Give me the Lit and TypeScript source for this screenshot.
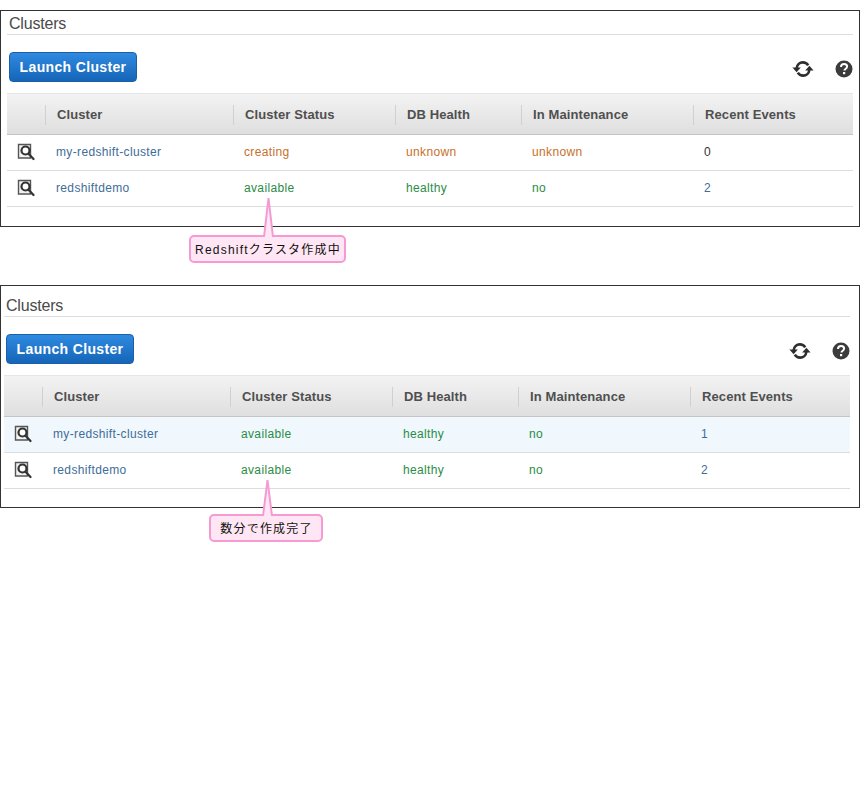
import { LitElement, html, css, svg } from 'lit';
import { customElement, property } from 'lit/decorators.js';

type Tone = 'warn' | 'ok' | 'link' | 'plain';
interface Cell { text: string; tone: Tone }
interface Row { name: string; highlight?: boolean; cells: Cell[] }

const warn = (text: string): Cell => ({ text, tone: 'warn' });
const ok = (text: string): Cell => ({ text, tone: 'ok' });
const link = (text: string): Cell => ({ text, tone: 'link' });
const plain = (text: string): Cell => ({ text, tone: 'plain' });

const COLUMNS = ['Cluster', 'Cluster Status', 'DB Health', 'In Maintenance', 'Recent Events'];

const zoomIcon = svg`<svg width="18" height="18" viewBox="0 0 18 18">
  <path d="M1.500 1.500h12v13.500h-12z" fill="#f2f2f2" stroke="#555" stroke-width="1.400"/>
  <circle cx="8.500" cy="7.500" r="4" fill="#fff" stroke="#333" stroke-width="2.200"/>
  <path d="M11.500 10.800l5 5.200" stroke="#333" stroke-width="2.200" stroke-linecap="round"/>
</svg>`;

const refreshIcon = svg`<svg width="22" height="18" viewBox="0 0 22 18">
  <path d="M4.600 8.400C5 4.600 7.700 2.400 10.800 2.400c2.400 0 4.300 1.100 5.400 3" fill="none" stroke="#2e2e2e" stroke-width="2.600"/>
  <path d="M17.400 9.600c-.4 3.800-3.100 6-6.200 6-2.400 0-4.300-1.100-5.400-3" fill="none" stroke="#2e2e2e" stroke-width="2.600"/>
  <path d="M0.400 7.400h8.400L4.600 12.200z" fill="#2e2e2e"/>
  <path d="M13.200 10.600h8.400L17.400 5.800z" fill="#2e2e2e"/>
</svg>`;

const helpIcon = svg`<svg width="18" height="18" viewBox="0 0 18 18">
  <circle cx="9" cy="9" r="8.500" fill="#3c3c3c"/>
  <path d="M6 7c0-1.900 1.300-2.900 3.100-2.900 1.800 0 3 1 3 2.500 0 1.300-.8 1.900-1.600 2.400-.7.500-1 .8-1 1.600" fill="none" stroke="#fff" stroke-width="2"/>
  <rect x="8" y="12" width="2.200" height="2.200" fill="#fff"/>
</svg>`;

@customElement('cluster-panel')
class ClusterPanel extends LitElement {
  @property({ type: Array }) rows: Row[] = [];

  static styles = css`
    :host {
      display: block;
    }
    .title {
      height: 23px;
      font-size: 16px;
      line-height: 25px;
      color: #4a4a4a;
      border-bottom: 1px solid #ddd;
      padding-left: 2px;
      letter-spacing: -0.2px;
    }
    .toolbar {
      display: flex;
      align-items: center;
      justify-content: space-between;
      height: 30px;
      margin: 17px 0 11px;
      padding: 0 0 0 2px;
    }
    .launch {
      width: 128px;
      height: 30px;
      box-sizing: border-box;
      border: 1px solid #1b5fa8;
      border-radius: 4px;
      background: linear-gradient(#2f8ae0, #1565b8);
      color: #fff;
      font: bold 14px 'Liberation Sans', Arial, sans-serif;
      letter-spacing: 0.35px;
      padding: 0;
    }
    .tools {
      display: flex;
      align-items: center;
      gap: 21px;
      margin-top: 4px;
    }
    .tools svg {
      display: block;
    }
    .grid {
      display: grid;
      grid-template-columns: 38px 188px 162px 126px 172px 160px;
    }
    .head {
      height: 42px;
      box-sizing: border-box;
      display: flex;
      align-items: center;
      padding-top: 1px;
      background: linear-gradient(#f3f3f3, #dfdfdf);
      border-top: 1px solid #e6e6e6;
      border-bottom: 1px solid #c4c4c4;
      font-weight: bold;
      font-size: 13px;
      letter-spacing: 0.1px;
      color: #4f4f4f;
    }
    .head span {
      border-left: 1px solid #d0d0d0;
      padding-left: 11px;
      line-height: 20px;
    }
    .cell {
      height: 36px;
      box-sizing: border-box;
      display: flex;
      align-items: center;
      padding: 0 0 2px 11px;
      border-bottom: 1px solid #ddd;
      font-size: 12px;
      letter-spacing: 0.35px;
    }
    .first {
      padding-left: 10px;
    }
    .highlight {
      background: #f0f8fd;
    }
    .warn { color: #c7702c; }
    .ok { color: #2a8c46; }
    .link { color: #3e6d99; }
    .plain { color: #333; }
  `;

  render() {
    return html`
      <div class="title">Clusters</div>
      <div class="toolbar">
        <button class="launch">Launch Cluster</button>
        <div class="tools">${refreshIcon}${helpIcon}</div>
      </div>
      <div class="grid">
        <div class="head"></div>
        ${COLUMNS.map((c) => html`<div class="head"><span>${c}</span></div>`)}
        ${this.rows.map((r) => {
          const bg = r.highlight ? 'highlight' : '';
          return html`
            <div class="cell first ${bg}">${zoomIcon}</div>
            <div class="cell link ${bg}">${r.name}</div>
            ${r.cells.map((c) => html`<div class="cell ${c.tone} ${bg}">${c.text}</div>`)}
          `;
        })}
      </div>
    `;
  }
}

@customElement('app-root')
export class AppRoot extends LitElement {
  static styles = css`
    :host {
      display: block;
      box-sizing: border-box;
      min-height: 795px;
      font-family: 'Liberation Sans', Arial, 'Noto Sans CJK JP', sans-serif;
      padding-top: 10px;
    }
    .frame {
      position: relative;
      box-sizing: border-box;
      width: 860px;
      border: 1px solid #333;
      background: #fff;
    }
    .one {
      height: 217px;
      padding: 0 6px;
    }
    .two {
      height: 223px;
      margin-top: 58px;
      padding: 7px 9px 0 3px;
    }
    .callout {
      position: absolute;
      z-index: 1;
      box-sizing: border-box;
      height: 28px;
      padding: 0 0 2px 1px;
      display: flex;
      align-items: center;
      justify-content: center;
      background: #ffe6f4;
      border: 2px solid #f59ad2;
      border-radius: 5px;
      font-size: 12px;
      letter-spacing: 1.2px;
      color: #111;
      white-space: nowrap;
    }
    .callout svg {
      position: absolute;
      overflow: visible;
    }
    .c1 {
      left: 188px;
      top: 224px;
      width: 157px;
    }
    .c1 svg {
      left: 68px;
      top: -39px;
    }
    .c2 {
      left: 208px;
      top: 228px;
      width: 114px;
    }
    .c2 svg {
      left: 47px;
      top: -36px;
    }
  `;

  private tail(h: number) {
    return svg`<svg width="19" height=${h + 2} viewBox="0 0 19 ${h + 2}">
      <path d="M5 ${h + 2}L9.500 0L14 ${h + 2}" fill="#ffe6f4" stroke="#f59ad2" stroke-width="2"/>
    </svg>`;
  }

  render() {
    const first: Row[] = [
      { name: 'my-redshift-cluster', cells: [warn('creating'), warn('unknown'), warn('unknown'), plain('0')] },
      { name: 'redshiftdemo', cells: [ok('available'), ok('healthy'), ok('no'), link('2')] },
    ];
    const second: Row[] = [
      { name: 'my-redshift-cluster', highlight: true, cells: [ok('available'), ok('healthy'), ok('no'), link('1')] },
      { name: 'redshiftdemo', cells: [ok('available'), ok('healthy'), ok('no'), link('2')] },
    ];
    return html`
      <div class="frame one">
        <cluster-panel .rows=${first}></cluster-panel>
        <div class="callout c1">${this.tail(37)}Redshiftクラスタ作成中</div>
      </div>
      <div class="frame two">
        <cluster-panel .rows=${second}></cluster-panel>
        <div class="callout c2">${this.tail(34)}数分で作成完了</div>
      </div>
    `;
  }
}
